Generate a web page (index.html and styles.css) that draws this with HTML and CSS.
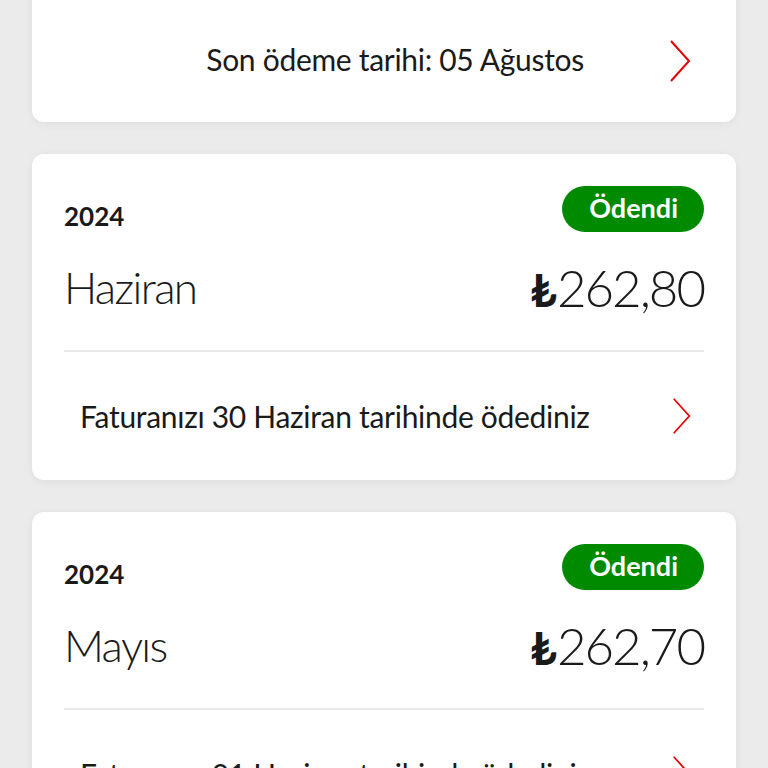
FILE: index.html
```html
<!DOCTYPE html>
<html lang="tr">
<head>
  <meta charset="UTF-8">
  <title>Faturalarım</title>
  <link rel="stylesheet" href="styles.css">
</head>
<body>
  <div class="bill-list">

    <!-- güncel fatura (üstü kaydırılmış) -->
    <section class="bill-card bill-card--current">
      <div class="bill-footer bill-footer--end">
        <span class="bill-note">Son ödeme tarihi: 05 Ağustos</span>
        <svg class="chevron" viewBox="0 0 24 44" aria-hidden="true"><path d="M3 2 L21 22 L3 42" /></svg>
      </div>
    </section>

    <section class="bill-card">
      <div class="bill-head">
        <span class="bill-year">2024</span>
        <span class="badge-paid">Ödendi</span>
      </div>
      <div class="bill-row">
        <span class="bill-month">Haziran</span>
        <span class="bill-amount"><span class="currency">₺</span>262,80</span>
      </div>
      <div class="bill-footer">
        <span class="bill-note">Faturanızı 30 Haziran tarihinde ödediniz</span>
        <svg class="chevron chevron--sm" viewBox="0 0 24 44" aria-hidden="true"><path d="M3 2 L21 22 L3 42" /></svg>
      </div>
    </section>

    <section class="bill-card">
      <div class="bill-head">
        <span class="bill-year">2024</span>
        <span class="badge-paid">Ödendi</span>
      </div>
      <div class="bill-row">
        <span class="bill-month">Mayıs</span>
        <span class="bill-amount"><span class="currency">₺</span>262,70</span>
      </div>
      <div class="bill-footer">
        <span class="bill-note">Faturanızı 01 Haziran tarihinde ödediniz</span>
        <svg class="chevron chevron--sm" viewBox="0 0 24 44" aria-hidden="true"><path d="M3 2 L21 22 L3 42" /></svg>
      </div>
    </section>

  </div>
</body>
</html>
```

FILE: styles.css
```css
body {
  margin: 0;
  background: #ebebeb;
  font-family: Lato, "Open Sans", "DejaVu Sans", sans-serif;
  color: #1a1a1a;
}

.bill-list {
  padding: 0 32px;
  display: flex;
  flex-direction: column;
  gap: 32px;
}

.bill-card {
  background: #fff;
  border-radius: 12px;
  padding: 32px 32px 0;
  box-shadow: 0 2px 8px rgba(0,0,0,0.06);
}

.bill-card--current {
  margin-top: -20px;
  padding-top: 20px;
}

.bill-head {
  display: flex;
  justify-content: space-between;
  align-items: center;
  height: 46px;
}

.bill-year {
  font-weight: 700;
  font-size: 26px;
  padding-top: 14px;
}

.badge-paid {
  background: #008a00;
  color: #fff;
  font-weight: 700;
  font-size: 27px;
  height: 46px;
  line-height: 44px;
  padding: 0 26px 0 27px;
  border-radius: 23px;
}

.bill-row {
  display: flex;
  justify-content: space-between;
  align-items: center;
  height: 110px;
  padding-bottom: 8px;
  border-bottom: 2px solid #e9e9e9;
}

.bill-month {
  font-size: 44px;
  font-weight: 300;
  letter-spacing: -1.6px;
}

.bill-amount {
  font-size: 51px;
  font-weight: 300;
  letter-spacing: -2px;
}

.currency {
  font-weight: 700;
  font-size: 46px;
  letter-spacing: 0;
}

.bill-footer {
  display: flex;
  align-items: center;
  justify-content: space-between;
  height: 128px;
  padding: 0 12px 0 16px;
}

.bill-footer--end {
  height: 122px;
  justify-content: flex-end;
}

.bill-footer--end .bill-note {
  margin-right: 84px;
  padding-bottom: 4px;
}

.bill-note {
  font-size: 30px;
  letter-spacing: -0.3px;
}

.chevron {
  width: 24px;
  height: 44px;
  flex: none;
}

.chevron--sm {
  width: 21px;
  height: 38px;
}

.chevron path {
  fill: none;
  stroke: #e60000;
  stroke-width: 2;
}
```
